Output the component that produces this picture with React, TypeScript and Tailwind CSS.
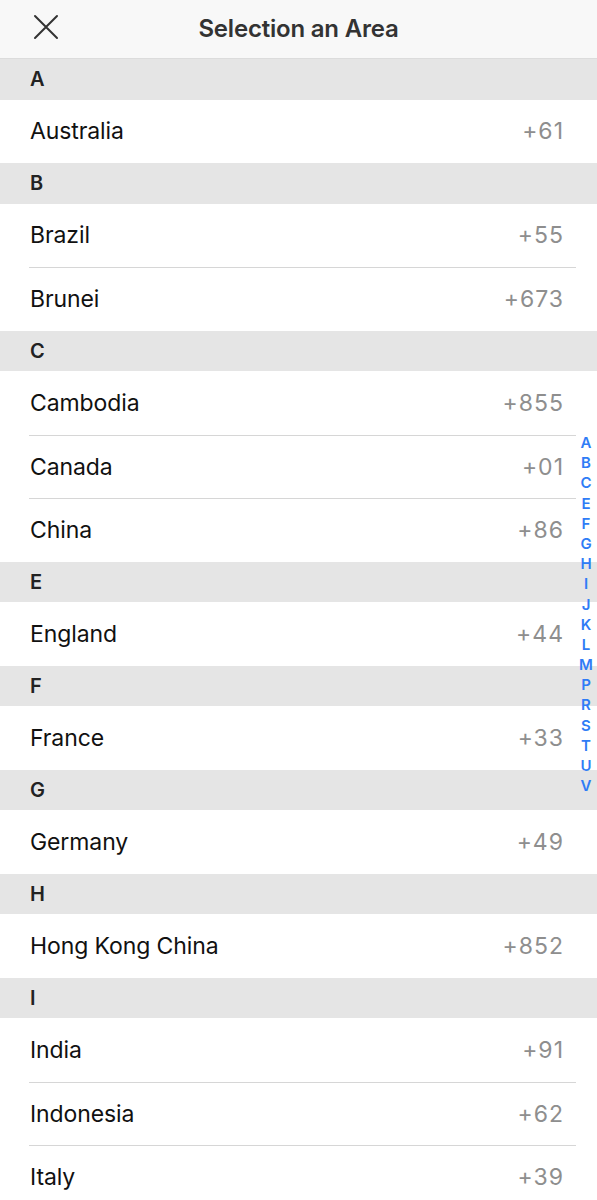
type Country = { name: string; code: string };
type Group = { letter: string; items: Country[] };

const groups: Group[] = [
  { letter: 'A', items: [{ name: 'Australia', code: '+61' }] },
  { letter: 'B', items: [{ name: 'Brazil', code: '+55' }, { name: 'Brunei', code: '+673' }] },
  {
    letter: 'C',
    items: [
      { name: 'Cambodia', code: '+855' },
      { name: 'Canada', code: '+01' },
      { name: 'China', code: '+86' },
    ],
  },
  { letter: 'E', items: [{ name: 'England', code: '+44' }] },
  { letter: 'F', items: [{ name: 'France', code: '+33' }] },
  { letter: 'G', items: [{ name: 'Germany', code: '+49' }] },
  { letter: 'H', items: [{ name: 'Hong Kong China', code: '+852' }] },
  {
    letter: 'I',
    items: [
      { name: 'India', code: '+91' },
      { name: 'Indonesia', code: '+62' },
      { name: 'Italy', code: '+39' },
    ],
  },
];

const indexLetters = ['A', 'B', 'C', 'E', 'F', 'G', 'H', 'I', 'J', 'K', 'L', 'M', 'P', 'R', 'S', 'T', 'U', 'V'];

export default function App() {
  return (
    <div className="relative h-[1200px] w-[597px] overflow-hidden bg-white font-['Inter','Liberation_Sans',sans-serif]">
      {/* top nav bar */}
      <header className="relative flex h-[59px] items-center justify-center border-b border-[#dcdcdc] bg-[#f8f8f8]">
        <button className="absolute left-[33px] top-[14px] text-[#333]">
          <svg width="26" height="26" viewBox="0 0 26 26" fill="none" stroke="currentColor" strokeWidth="2" strokeLinecap="round">
            <path d="M2 2 L24 24 M24 2 L2 24" />
          </svg>
        </button>
        <h1 className="text-[24px] font-semibold tracking-[-0.2px] text-[#333]">Selection an Area</h1>
      </header>

      {/* grouped country list */}
      <div>
        {groups.map((g) => (
          <section key={g.letter}>
            <div className="flex h-[40.5px] items-center bg-[#e5e5e5] pl-[30px] text-[20px] font-semibold text-[#222]">
              {g.letter}
            </div>
            {g.items.map((c, i) => (
              <div key={c.name} className="h-[63.5px] pl-[29px] pr-[21px]">
                <div
                  className={
                    'flex h-full items-center justify-between pl-[1px] pr-[12px] ' +
                    (i > 0 ? 'border-t border-[#d6d6d6]' : '')
                  }
                >
                  <span className="text-[23px] tracking-[-0.1px] text-[#111]">{c.name}</span>
                  <span className="text-[23px] tracking-[1px] text-[#8e8e8e]">{c.code}</span>
                </div>
              </div>
            ))}
          </section>
        ))}
      </div>

      {/* alphabet index */}
      <div className="absolute right-[4px] top-[433px] flex w-[14px] flex-col items-center">
        {indexLetters.map((l) => (
          <span key={l} className="h-[20.2px] text-[15px] font-semibold leading-[20.2px] text-[#2f7cf6]">
            {l}
          </span>
        ))}
      </div>
    </div>
  );
}
